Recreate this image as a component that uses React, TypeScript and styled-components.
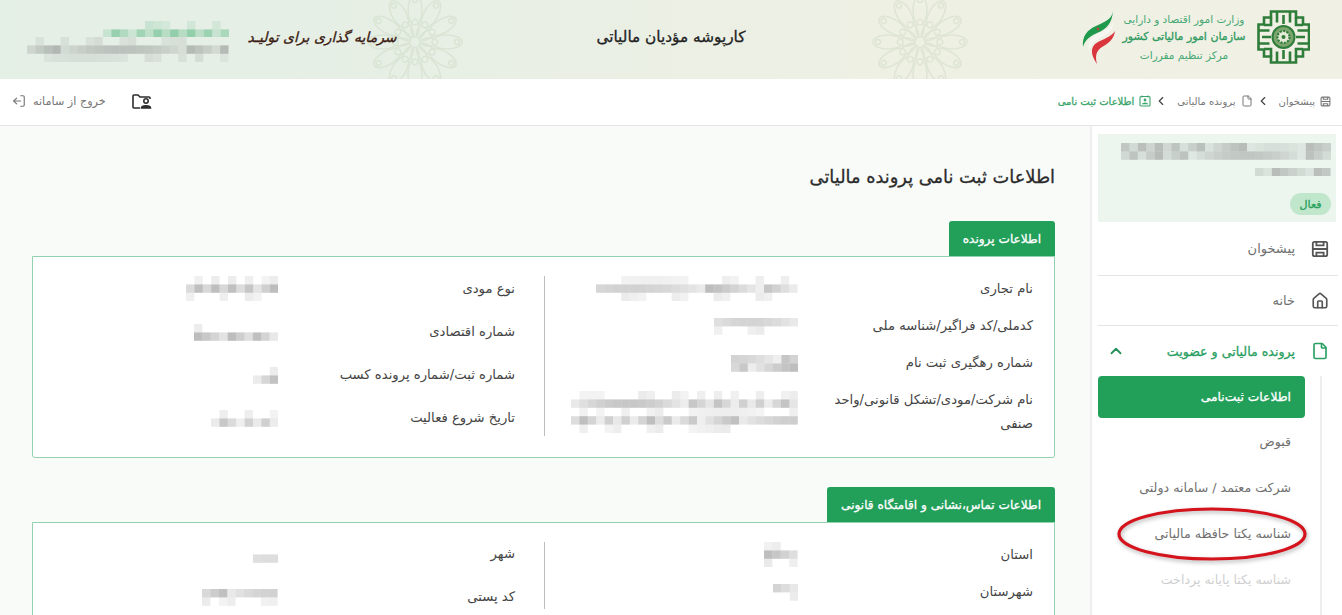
import React from 'react';
import styled, { createGlobalStyle, css } from 'styled-components';
import { ChevronLeft, ChevronUp, File, House, LogOut } from 'lucide-react';

const GlobalStyle = createGlobalStyle`
  html, body {
    margin: 0;
    padding: 0;
    height: 615px;
    overflow: hidden;
    background: #fff;
  }
  * { box-sizing: border-box; }
`;

// the original font has a medium weight, DejaVu bold runs too wide
const medium = css`
  font-weight: 400;
  -webkit-text-stroke: 0.3px currentColor;
`;

const Page = styled.div`
  direction: rtl;
  width: 1342px;
  height: 615px;
  overflow: hidden;
  display: flex;
  flex-direction: column;
  font-family: 'DejaVu Sans', sans-serif;
  color: #444;
`;

/* header */
const Header = styled.header`
  position: relative;
  flex: none;
  height: 79px;
  padding-bottom: 5px;
  display: grid;
  grid-template-columns: 1fr auto 1fr;
  align-items: center;
  background: linear-gradient(270deg, #f1f0e4 0%, #eef0e4 35%, #e7efe5 70%, #e4efe6 100%);
  overflow: hidden;
`;

const Ornament = styled.svg<{ $left: number }>`
  position: absolute;
  top: -8px;
  left: ${(p) => p.$left}px;
  width: 100px;
  height: 100px;
  opacity: 0.4;
  filter: blur(0.7px);
`;

const OrgGroup = styled.div`
  position: relative;
  display: flex;
  align-items: center;
  padding-right: 32px;
`;

const OrgText = styled.div`
  width: 126px;
  margin: 0 10px 0 5px;
  display: flex;
  flex-direction: column;
  align-items: center;
  gap: 4px;
  color: #46a873;
  font-size: 10.5px;
  line-height: 14px;
  white-space: nowrap;
`;

const OrgName = styled.div`
  ${medium}
  font-size: 11px;
  color: #2f9a5f;
`;

const HeaderTitle = styled.h1`
  position: relative;
  margin: 0;
  font-size: 15.3px;
  ${medium}
  color: #222;
`;

const UserGroup = styled.div`
  position: relative;
  display: flex;
  align-items: center;
  justify-content: flex-end;
  gap: 21px;
  padding-left: 27px;
`;

const Slogan = styled.div`
  width: 147px;
  font-size: 14px;
  font-style: italic;
  ${medium}
  color: #3b1b12;
  white-space: nowrap;
  text-align: center;
`;

const UserMosaics = styled.div`
  padding-top: 9px;
  display: flex;
  flex-direction: column;
  align-items: flex-start;
`;

/* toolbar */
const Toolbar = styled.div`
  flex: none;
  height: 47px;
  padding: 0 11px 2px 12px;
  display: flex;
  align-items: center;
  justify-content: space-between;
  background: #fff;
  border-bottom: 1px solid #e6e6e6;
`;

const Crumbs = styled.nav`
  display: flex;
  align-items: center;
`;

const Crumb = styled.span<{ $active?: boolean }>`
  display: flex;
  align-items: center;
  gap: 5px;
  font-size: 10px;
  color: ${(p) => (p.$active ? '#3ba56b' : '#777')};
  ${(p) => p.$active && medium}
`;

const CrumbArrow = styled.span`
  display: flex;
  margin: 0 9px 0 3px;
  color: #444;
`;

const ToolbarActions = styled.div`
  display: flex;
  align-items: center;
  gap: 26px;
`;

const Logout = styled.span`
  display: flex;
  align-items: center;
  gap: 7px;
  font-size: 11.2px;
  color: #777;
`;

const LogoutIcon = styled(LogOut)`
  transform: scaleX(-1);
`;

/* body */
const Body = styled.div`
  flex: 1;
  min-height: 0;
  display: flex;
`;

const Sidebar = styled.aside`
  flex: none;
  width: 252px;
  padding: 8px 4px 0 6px;
  background: #fff;
  border-left: 2px solid #eee;
`;

const ProfileCard = styled.div`
  height: 88px;
  margin-right: 2px;
  padding: 9px 5px 0 0;
  background: #ecf6ef;
  display: flex;
  flex-direction: column;
  align-items: flex-start;
`;

const CardLine = styled.div`
  margin-top: 8px;
`;

const Badge = styled.span`
  margin-top: 17px;
  width: 41px;
  height: 22px;
  border-radius: 11px;
  background: #c0e6cb;
  color: #27a05c;
  font-size: 11px;
  ${medium}
  display: flex;
  align-items: center;
  justify-content: center;
`;

const MenuRow = styled.div<{ $active?: boolean; $height: number; $last?: boolean }>`
  height: ${(p) => p.$height}px;
  padding: 0 9px 0 9px;
  display: flex;
  align-items: center;
  gap: 16px;
  font-size: ${(p) => (p.$active ? 12.6 : 13)}px;
  white-space: nowrap;
  color: ${(p) => (p.$active ? '#2aa062' : '#6f6f6f')};
  ${(p) => p.$active && medium}
  border-bottom: ${(p) => (p.$last ? 'none' : '1px solid #e4e4e4')};
`;

const MenuIcon = styled.span<{ $active?: boolean }>`
  display: flex;
  color: ${(p) => (p.$active ? '#2aa062' : '#555')};
`;

const MenuChevron = styled.span`
  margin-right: auto;
  display: flex;
  color: #26905a;
`;

const SubList = styled.div`
  position: relative;
  margin-right: 16px;
  padding-right: 15px;
  border-right: 2px solid #eee;
  height: 240px;
`;

const SubActive = styled.div`
  height: 42px;
  padding: 0 14px;
  display: flex;
  align-items: center;
  background: #22a05a;
  border-radius: 4px;
  color: #fff;
  font-size: 12.3px;
  ${medium}
`;

const SubItem = styled.div<{ $disabled?: boolean }>`
  height: 46px;
  padding: 0 14px;
  display: flex;
  align-items: center;
  font-size: 12.6px;
  color: ${(p) => (p.$disabled ? '#cfcfcf' : '#6f6f6f')};
`;

const Highlight = styled.svg`
  position: absolute;
  top: 128px;
  right: 11px;
  width: 194px;
  height: 60px;
  filter: drop-shadow(1px 2px 2px rgba(0, 0, 0, 0.3));
`;

const Main = styled.main`
  flex: 1;
  min-width: 0;
  padding: 39px 35px 0 32px;
  background: #f9fbf9;
`;

const PageTitle = styled.h2`
  margin: 0 0 32px;
  font-size: 17.8px;
  line-height: 24px;
  ${medium}
  color: #2b2b2b;
`;

const Section = styled.section`
  margin-bottom: 29px;
`;

const Tab = styled.div`
  width: fit-content;
  height: 35px;
  padding: 0 14px;
  display: flex;
  align-items: center;
  background: #22a05a;
  color: #fff;
  font-size: 12.1px;
  ${medium}
  border-radius: 3px 3px 0 0;
  white-space: nowrap;
`;

const Panel = styled.div`
  padding: 19px 0 21px;
  display: grid;
  grid-template-columns: 510px 1fr;
  background: #fff;
  border: 1px solid #94d1ae;
  border-radius: 0 0 3px 3px;
`;

const Column = styled.div<{ $first?: boolean }>`
  padding-right: ${(p) => (p.$first ? 21 : 29)}px;
  display: flex;
  flex-direction: column;
  gap: ${(p) => (p.$first ? 13 : 19)}px;
  border-left: ${(p) => (p.$first ? '1px solid #bdbdbd' : 'none')};
`;

const Field = styled.div<{ $first?: boolean }>`
  display: grid;
  grid-template-columns: 205px auto;
  column-gap: ${(p) => (p.$first ? 30 : 32)}px;
  justify-content: start;
  align-items: center;
`;

const Label = styled.div`
  font-size: 13.2px;
  line-height: 24px;
  color: #444;
`;

const MosaicSvg = styled.svg`
  display: block;
  flex: none;
  filter: blur(0.6px);
`;

const GRAY = '#7f7f7f';
const GREEN = '#2fa765';
const CELL = 8.4;

// pseudo random blur cells, dark rows listed in core
const Mosaic: React.FC<{ cols: number; rows: number; core: number[]; seed: number; color?: string }> = ({
  cols,
  rows,
  core,
  seed,
  color = GRAY,
}) => {
  const cells: React.ReactNode[] = [];
  for (let r = 0; r < rows; r++) {
    for (let c = 0; c < cols; c++) {
      const v = Math.abs(Math.sin(seed * 12.9 + r * 78.2 + c * 37.7) * 43758.5) % 1;
      const alpha = core.includes(r) ? 0.12 + v * 0.4 : v > 0.55 ? v * 0.16 : 0;
      cells.push(<rect key={`${r}-${c}`} x={c * CELL} y={r * CELL} width={CELL} height={CELL} fill={color} opacity={alpha} />);
    }
  }
  return (
    <MosaicSvg width={cols * CELL} height={rows * CELL} viewBox={`0 0 ${cols * CELL} ${rows * CELL}`}>
      {cells}
    </MosaicSvg>
  );
};

const Rosette: React.FC<{ left: number }> = ({ left }) => (
  <Ornament $left={left} viewBox="0 0 100 100">
    <g fill="none" stroke="#c9d6bd" strokeWidth="1.6">
      {Array.from({ length: 12 }).map((_, i) => (
        <g key={i} transform={`rotate(${i * 30} 50 50)`}>
          <ellipse cx="50" cy="18" rx="7" ry="15" />
          <ellipse cx="50" cy="36" rx="4" ry="9" />
          <circle cx="50" cy="8" r="2.5" />
        </g>
      ))}
    </g>
  </Ornament>
);

const TaxLogo = () => (
  <svg width="53" height="54" viewBox="0 0 53 54" fill="none" stroke="#2f7d3a" strokeWidth="2.6">
    <path d="M14 1.5h25v6h7v7h6v25h-6v7h-7v6H14v-6H7v-7H1.5V14.5H7v-7h7z" />
    <path d="M20 1.5v11M26.5 5v9M33 1.5v11M20 52.5v-11M26.5 49v-9M33 52.5v-11" />
    <path d="M1.5 20.5h11M5 27h9M1.5 33.5h11M51.5 20.5h-11M48 27h-9M51.5 33.5h-11" />
    <path d="M14 7.5v7.5H7M39 7.5v7.5h7M14 46.5v-7.5H7M39 46.5v-7.5h7" />
    <circle cx="26.5" cy="27" r="11" fill="#7da56f" strokeWidth="2" />
    <circle cx="26.5" cy="27" r="6" fill="#e6ebd7" strokeWidth="2.2" strokeDasharray="2 1.4" />
    <circle cx="26.5" cy="27" r="2" fill="#2f7d3a" stroke="none" />
  </svg>
);

const FlagMark = () => (
  <svg width="34" height="55" viewBox="0 0 34 55">
    <path d="M31 1C30 9 23 12 14 16 5 20 0 26 1 37 3 30 8 26 15 23 25 19 30 13 31 1z" fill="#1f9a4d" />
    <path d="M32 12C29 18 22 21 14 25 8 28 6 33 7 41 9 35 12 31 18 28 26 24 31 20 32 12z" fill="#f7f7f2" />
    <path d="M33 21C30 26 24 28 18 31 9 35 7 42 15 54 13 46 14 41 20 37 27 33 32 29 33 21z" fill="#d9363e" />
    <circle cx="16" cy="19" r="1.4" fill="#b4463f" />
  </svg>
);

const DashboardIcon: React.FC<{ size: number }> = ({ size }) => (
  <svg width={size} height={size} viewBox="0 0 20 20" fill="none" stroke="currentColor" strokeWidth="2">
    <rect x="2" y="2" width="16" height="16" rx="2" />
    <path d="M2 10h16M6 2v4h8V2M6 18v-4h8v4" />
  </svg>
);

const RegisterIcon = () => (
  <svg width="12" height="12" viewBox="0 0 12 12" fill="none" stroke="#3ba56b" strokeWidth="1.1">
    <rect x="1" y="1.5" width="10" height="9.5" rx="1" />
    <path d="M3 0.5v2M9 0.5v2" />
    <circle cx="6" cy="5" r="1.4" fill="#3ba56b" stroke="none" />
    <path d="M3.4 9.2c.4-1.6 4.8-1.6 5.2 0" fill="#3ba56b" />
  </svg>
);

const UserFolderIcon = () => (
  <svg width="20" height="15" viewBox="0 0 20 15" fill="none" stroke="#2d2d2d" strokeWidth="1.6">
    <path d="M8 14H2a1 1 0 0 1-1-1V2a1 1 0 0 1 1-1h4l2 2h9a1 1 0 0 1 1 1v1" />
    <circle cx="14" cy="7" r="2.2" />
    <path d="M9.5 14c0-3 9-3 9 0z" fill="#2d2d2d" />
  </svg>
);

type Row = { label: string; cols: number; rows: number; core: number[] };

const Fields: React.FC<{ rows: Row[]; first?: boolean; seed: number }> = ({ rows, first, seed }) => (
  <Column $first={first}>
    {rows.map((row, i) => (
      <Field key={row.label} $first={first}>
        <Label>{row.label}</Label>
        <Mosaic cols={row.cols} rows={row.rows} core={row.core} seed={seed + i} />
      </Field>
    ))}
  </Column>
);

const fileRight: Row[] = [
  { label: 'نام تجاری', cols: 24, rows: 3, core: [1] },
  { label: 'کدملی/کد فراگیر/شناسه ملی', cols: 10, rows: 2, core: [0] },
  { label: 'شماره رهگیری ثبت نام', cols: 8, rows: 2, core: [0, 1] },
  { label: 'نام شرکت/مودی/تشکل قانونی/واحد صنفی', cols: 27, rows: 5, core: [1, 3] },
];

const fileLeft: Row[] = [
  { label: 'نوع مودی', cols: 11, rows: 3, core: [1] },
  { label: 'شماره اقتصادی', cols: 10, rows: 2, core: [1] },
  { label: 'شماره ثبت/شماره پرونده کسب', cols: 3, rows: 2, core: [1] },
  { label: 'تاریخ شروع فعالیت', cols: 8, rows: 2, core: [1] },
];

const contactRight: Row[] = [
  { label: 'استان', cols: 4, rows: 3, core: [1] },
  { label: 'شهرستان', cols: 3, rows: 2, core: [0] },
];

const contactLeft: Row[] = [
  { label: 'شهر', cols: 3, rows: 2, core: [1] },
  { label: 'کد پستی', cols: 9, rows: 2, core: [0] },
];

const App: React.FC = () => (
  <Page>
    <GlobalStyle />
    <Header>
      <Rosette left={365} />
      <Rosette left={870} />
      <OrgGroup>
        <TaxLogo />
        <OrgText>
          <div>وزارت امور اقتصاد و دارایی</div>
          <OrgName>سازمان امور مالیاتی کشور</OrgName>
          <div>مرکز تنظیم مقررات</div>
        </OrgText>
        <FlagMark />
      </OrgGroup>
      <HeaderTitle>کارپوشه مؤدیان مالیاتی</HeaderTitle>
      <UserGroup>
        <Slogan>سرمایه گذاری برای تولیـد</Slogan>
        <UserMosaics>
          <Mosaic cols={15} rows={2} core={[1]} seed={3} color={GREEN} />
          <Mosaic cols={24} rows={3} core={[1]} seed={8} />
        </UserMosaics>
      </UserGroup>
    </Header>

    <Toolbar>
      <Crumbs>
        <Crumb>
          <DashboardIcon size={11} />
          پیشخوان
        </Crumb>
        <CrumbArrow>
          <ChevronLeft size={14} />
        </CrumbArrow>
        <Crumb>
          <File size={12} />
          پرونده مالیاتی
        </Crumb>
        <CrumbArrow>
          <ChevronLeft size={14} />
        </CrumbArrow>
        <Crumb $active>
          <RegisterIcon />
          اطلاعات ثبت نامی
        </Crumb>
      </Crumbs>
      <ToolbarActions>
        <UserFolderIcon />
        <Logout>
          خروج از سامانه
          <LogoutIcon size={14} />
        </Logout>
      </ToolbarActions>
    </Toolbar>

    <Body>
      <Sidebar>
        <ProfileCard>
          <Mosaic cols={25} rows={2} core={[0, 1]} seed={14} />
          <CardLine>
            <Mosaic cols={9} rows={1} core={[0]} seed={19} />
          </CardLine>
          <Badge>فعال</Badge>
        </ProfileCard>
        <MenuRow $height={54}>
          <MenuIcon>
            <DashboardIcon size={18} />
          </MenuIcon>
          پیشخوان
        </MenuRow>
        <MenuRow $height={50}>
          <MenuIcon>
            <House size={18} strokeWidth={2.2} />
          </MenuIcon>
          خانه
        </MenuRow>
        <MenuRow $height={50} $active $last>
          <MenuIcon $active>
            <File size={18} strokeWidth={2.2} />
          </MenuIcon>
          پرونده مالیاتی و عضویت
          <MenuChevron>
            <ChevronUp size={18} strokeWidth={2.4} />
          </MenuChevron>
        </MenuRow>
        <SubList>
          <SubActive>اطلاعات ثبت‌نامی</SubActive>
          <SubItem>قبوض</SubItem>
          <SubItem>شرکت معتمد / سامانه دولتی</SubItem>
          <SubItem>شناسه یکتا حافظه مالیاتی</SubItem>
          <SubItem $disabled>شناسه یکتا پایانه پرداخت</SubItem>
          <Highlight viewBox="0 0 194 60">
            <ellipse cx="97" cy="30" rx="93" ry="25" fill="none" stroke="#d5131d" strokeWidth="3.2" />
          </Highlight>
        </SubList>
      </Sidebar>

      <Main>
        <PageTitle>اطلاعات ثبت نامی پرونده مالیاتی</PageTitle>
        <Section>
          <Tab>اطلاعات پرونده</Tab>
          <Panel>
            <Fields first rows={fileRight} seed={21} />
            <Fields rows={fileLeft} seed={31} />
          </Panel>
        </Section>
        <Section>
          <Tab>اطلاعات تماس،نشانی و اقامتگاه قانونی</Tab>
          <Panel>
            <Fields first rows={contactRight} seed={41} />
            <Fields rows={contactLeft} seed={51} />
          </Panel>
        </Section>
      </Main>
    </Body>
  </Page>
);

export default App;
